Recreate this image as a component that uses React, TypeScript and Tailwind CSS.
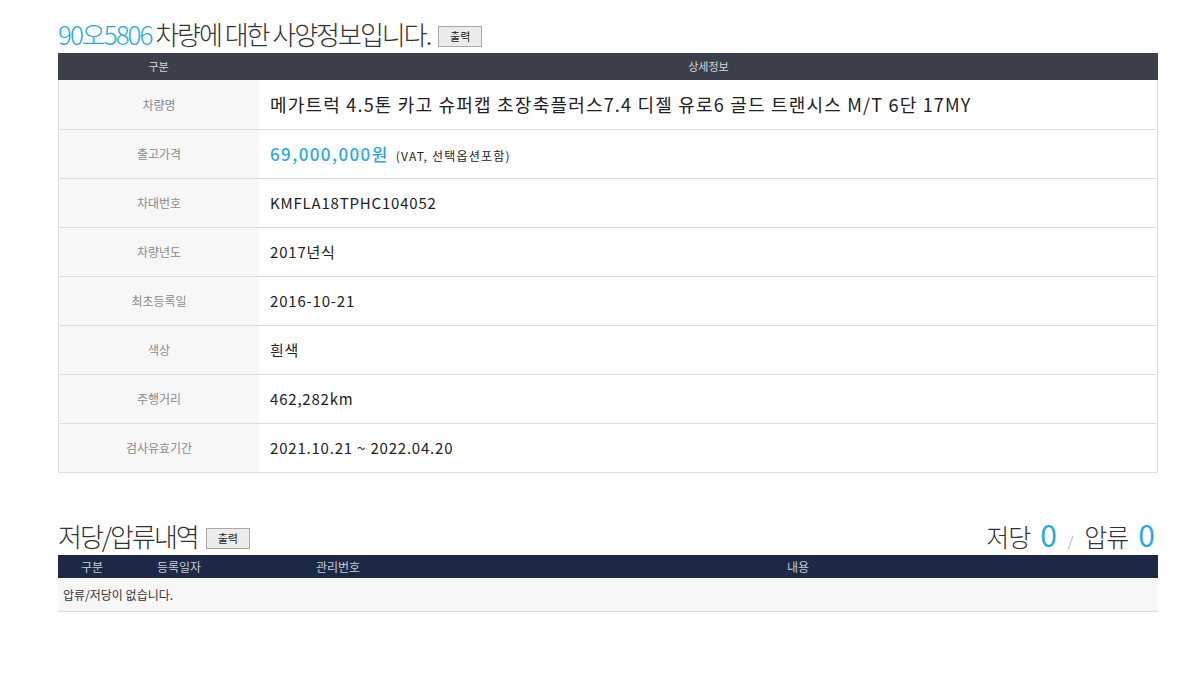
import React from "react";

const font = { fontFamily: '"Noto Sans CJK KR", "Noto Sans", sans-serif' };

const specs: { label: string; value: React.ReactNode }[] = [
  {
    label: "차량명",
    value: (
      <span className="text-[18px] tracking-[1.2px]">
        메가트럭 4.5톤 카고 슈퍼캡 초장축플러스7.4 디젤 유로6 골드 트랜시스 M/T 6단 17MY
      </span>
    ),
  },
  {
    label: "출고가격",
    value: (
      <span className="flex items-baseline gap-[7px]">
        <span className="text-[17px] font-medium tracking-[1.4px] text-[#2aa9dc]">69,000,000원</span>
        <span className="text-[12px] tracking-[1.2px]">(VAT, 선택옵션포함)</span>
      </span>
    ),
  },
  { label: "차대번호", value: "KMFLA18TPHC104052" },
  { label: "차량년도", value: "2017년식" },
  { label: "최초등록일", value: "2016-10-21" },
  { label: "색상", value: "흰색" },
  { label: "주행거리", value: "462,282km" },
  { label: "검사유효기간", value: "2021.10.21 ~ 2022.04.20" },
];

function PrintButton() {
  return (
    <button className="h-[21px] w-[44px] border border-[#a9a9a9] bg-[#ececec] text-[11px] text-[#222] leading-none">
      출력
    </button>
  );
}

export default function App() {
  return (
    <div className="min-h-[690px] bg-white text-[#333]" style={font}>
      <div className="ml-[58px] w-[1100px]">
        <div className="flex h-[53px] items-end gap-2 pb-[6px]">
          <h1 className="text-[26px] leading-none tracking-[-2px] font-light text-[#333]">
            <span className="text-[#2aa9dc]">90오5806</span> 차량에 대한 사양정보입니다.
          </h1>
          <PrintButton />
        </div>

        <div className="border-x border-b border-[#dddddd]">
          <div className="-mx-px flex h-[27px] items-center bg-[#3b3f4c] text-[11px] text-[#d8d8d8]">
            <div className="w-[201px] text-center">구분</div>
            <div className="flex-1 text-center">상세정보</div>
          </div>
          {specs.map((s, i) => (
            <div
              key={s.label}
              className={`flex h-[49px] items-stretch ${i > 0 ? "border-t border-[#dddddd]" : ""}`}
            >
              <div className="flex w-[200px] items-center justify-center bg-[#f7f7f7] text-[12px] text-[#8a8a8a]">
                {s.label}
              </div>
              <div className="flex flex-1 items-center pl-[11px] text-[15px] tracking-[0.8px] text-[#222]">
                {s.value}
              </div>
            </div>
          ))}
        </div>

        <div className="mt-[38px] flex h-[44px] items-end justify-between pb-[6px]">
          <div className="flex items-end gap-2">
            <h2 className="text-[26px] leading-none tracking-[-2px] font-light text-[#333]">저당/압류내역</h2>
            <PrintButton />
          </div>
          <div className="flex items-baseline text-[25px] leading-none tracking-[-1px] font-light text-[#333]">
            <span>저당</span>
            <span className="ml-[10px] text-[30px] font-normal text-[#2aa9dc]">0</span>
            <span className="mx-[12px] text-[14px] text-[#999]">/</span>
            <span>압류</span>
            <span className="ml-[10px] mr-[4px] text-[30px] font-normal text-[#2aa9dc]">0</span>
          </div>
        </div>

        <div className="flex h-[23px] items-center bg-[#1b2846] text-[12px] text-[#c8cdd8]">
          <div className="w-[68px] text-center">구분</div>
          <div className="w-[108px] pl-[31px]">등록일자</div>
          <div className="w-[484px] pl-[82px]">관리번호</div>
          <div className="flex-1 pl-[69px]">내용</div>
        </div>
        <div className="flex h-[34px] items-center border-b border-[#dddddd] bg-[#f7f7f7] pl-[5px] text-[12px] text-[#333]">
          압류/저당이 없습니다.
        </div>
      </div>
    </div>
  );
}
